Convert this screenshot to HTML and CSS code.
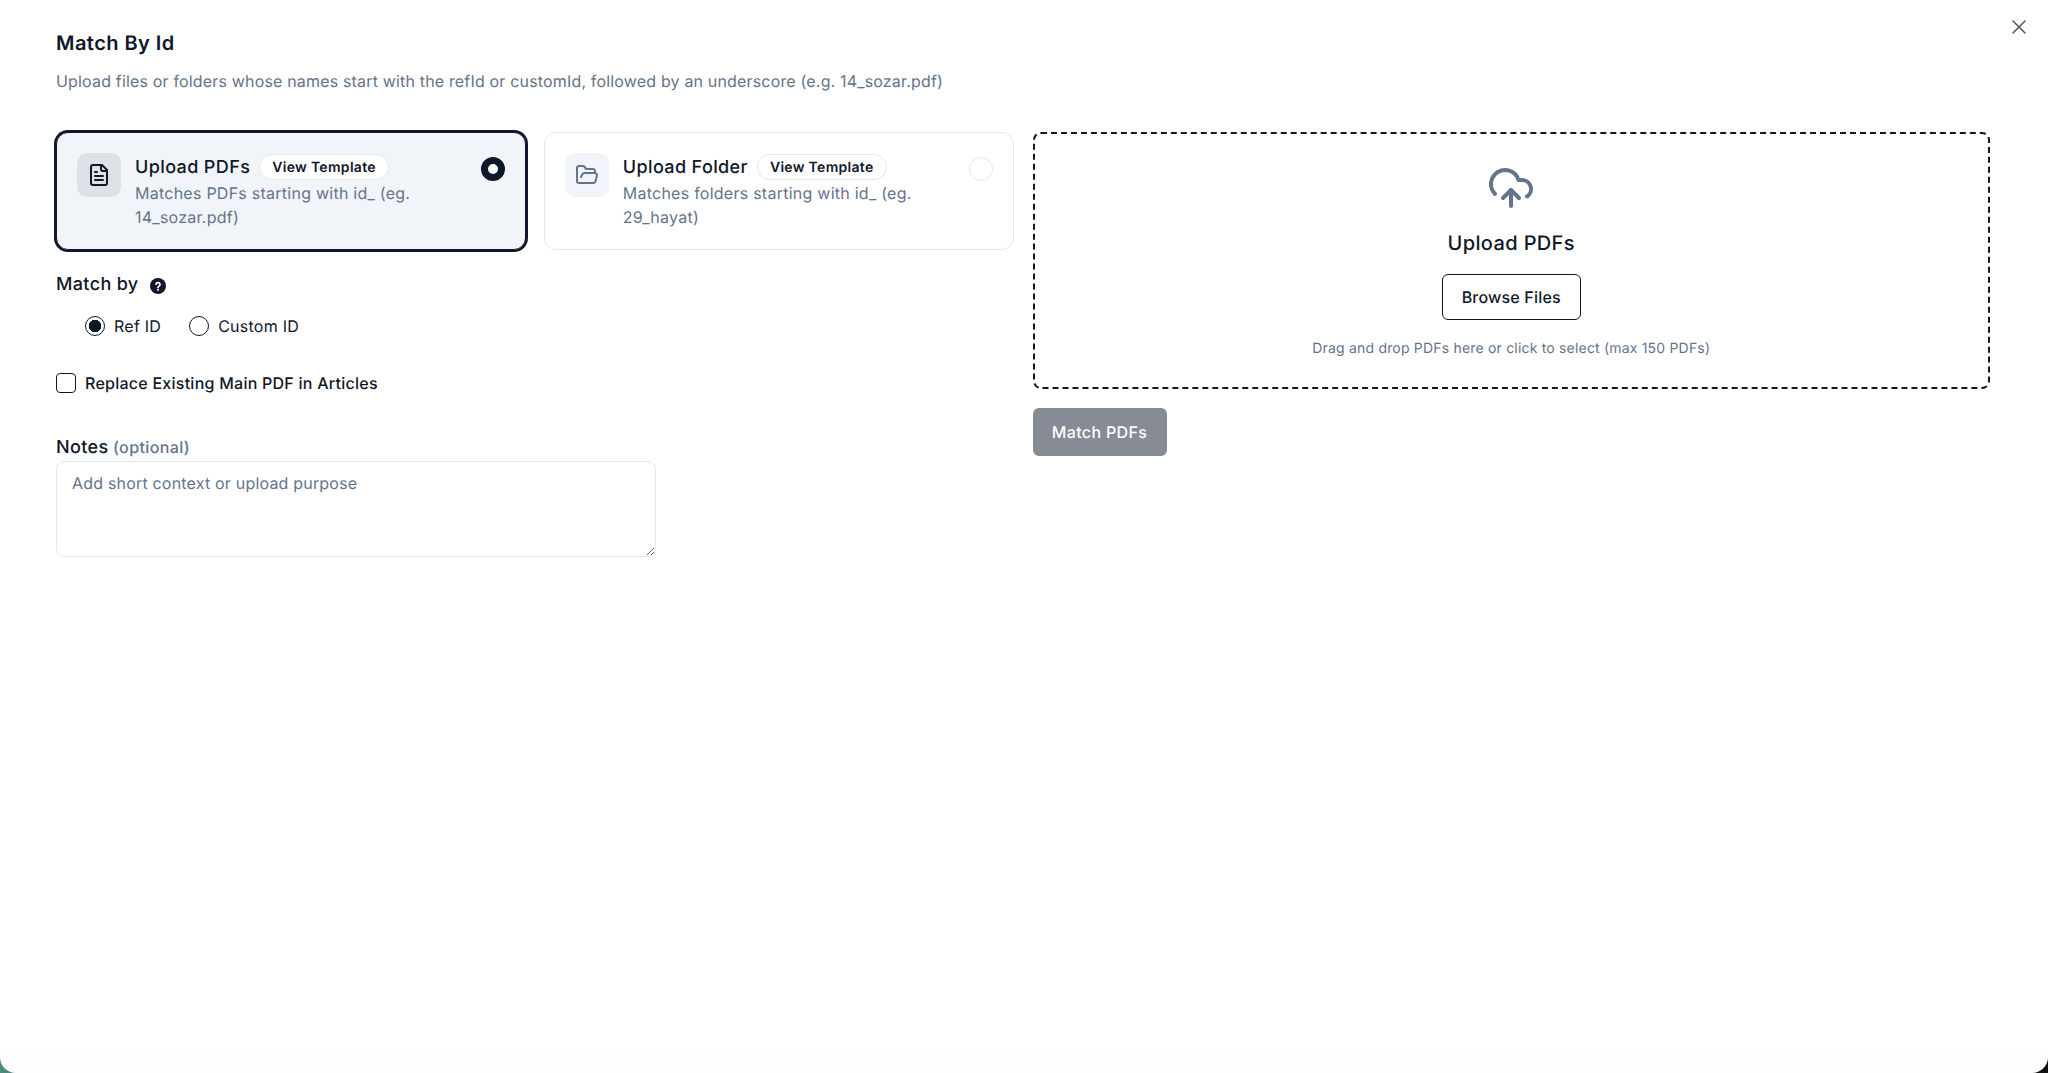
FILE: index.html
```html
<!DOCTYPE html>
<html lang="en">
<head>
<meta charset="utf-8">
<title>Match By Id</title>
<link rel="stylesheet" href="styles.css">
</head>
<body>
<div class="modal">
  <button class="close" aria-label="Close">
    <svg class="icon-close" viewBox="0 0 24 24"><path d="M18 6 6 18"/><path d="m6 6 12 12"/></svg>
  </button>
  <header class="head">
    <h1 class="title">Match By Id</h1>
    <p class="subtitle">Upload files or folders whose names start with the refId or customId, followed by an underscore (e.g. 14_sozar.pdf)</p>
  </header>
  <div class="columns">
    <section class="left">
      <div class="cards">
        <div class="card card-active">
          <div class="card-icon">
            <svg class="icon-24" viewBox="0 0 24 24"><path d="M15 2H6a2 2 0 0 0-2 2v16a2 2 0 0 0 2 2h12a2 2 0 0 0 2-2V7Z"/><path d="M14 2v4a2 2 0 0 0 2 2h4"/><path d="M10 9H8"/><path d="M16 13H8"/><path d="M16 17H8"/></svg>
          </div>
          <div class="card-body">
            <div class="card-title-row"><span class="card-title">Upload PDFs</span><span class="badge">View Template</span></div>
            <p class="card-desc">Matches PDFs starting with id_ (eg. 14_sozar.pdf)</p>
          </div>
          <span class="card-radio"></span>
        </div>
        <div class="card">
          <div class="card-icon">
            <svg class="icon-24" viewBox="0 0 24 24"><path d="m6 14 1.5-2.9A2 2 0 0 1 9.24 10H20a2 2 0 0 1 1.94 2.5l-1.54 6a2 2 0 0 1-1.95 1.5H4a2 2 0 0 1-2-2V5a2 2 0 0 1 2-2h3.9a2 2 0 0 1 1.69.9l.81 1.2a2 2 0 0 0 1.67.9H18a2 2 0 0 1 2 2v2"/></svg>
          </div>
          <div class="card-body">
            <div class="card-title-row"><span class="card-title">Upload Folder</span><span class="badge">View Template</span></div>
            <p class="card-desc">Matches folders starting with id_ (eg. 29_hayat)</p>
          </div>
          <span class="card-radio"></span>
        </div>
      </div>
      <div class="match-by">
        <span class="label label-match">Match by</span>
        <svg class="icon-help" viewBox="0 0 16 16"><circle class="help-disc" cx="8" cy="8" r="8"/><path class="help-mark" d="M5.9 6.2a2.15 2.15 0 0 1 4.2.3c0 1.4-2.1 1.7-2.1 3"/><circle class="help-dot" cx="8" cy="11.8" r="1"/></svg>
      </div>
      <div class="radio-row">
        <span class="option"><span class="radio radio-on"></span>Ref ID</span>
        <span class="option"><span class="radio"></span>Custom ID</span>
      </div>
      <div class="check-row"><span class="checkbox"></span>Replace Existing Main PDF in Articles</div>
      <div class="notes-label"><span class="label">Notes</span> <span class="optional">(optional)</span></div>
      <textarea class="notes" placeholder="Add short context or upload purpose"></textarea>
    </section>
    <section class="right">
      <div class="drop">
        <svg class="icon-cloud" viewBox="0 0 24 24"><path d="M12 13v8"/><path d="M4 14.899A7 7 0 1 1 15.71 8h1.79a4.5 4.5 0 0 1 2.5 8.242"/><path d="m8 17 4-4 4 4"/></svg>
        <div class="drop-title">Upload PDFs</div>
        <button class="browse">Browse Files</button>
        <div class="drop-hint">Drag and drop PDFs here or click to select (max 150 PDFs)</div>
      </div>
      <button class="submit">Match PDFs</button>
    </section>
  </div>
</div>
</body>
</html>
```
FILE: styles.css
```css
* { box-sizing: border-box; }
html, body { height: 100%; }
body {
  margin: 0;
  overflow: hidden;
  font-family: Inter, "Liberation Sans", sans-serif;
  text-rendering: geometricPrecision;
  color: #0f172a;
  background: linear-gradient(90deg, #4f8a80 0%, #4f8a80 50%, #111 50%, #111 100%);
}
svg { fill: none; stroke: currentColor; stroke-width: 2; stroke-linecap: round; stroke-linejoin: round; flex: none; }
.modal {
  position: relative;
  height: 100%;
  padding: 29px 58px 0 56px;
  background: linear-gradient(#fff 96%, #fdfdfd 100%);
  border-radius: 0 0 16px 16px;
}
.close {
  position: absolute;
  top: 15px;
  right: 17px;
  width: 24px;
  height: 24px;
  padding: 0;
  border: 0;
  background: none;
  color: #4b5563;
  display: flex;
}
.icon-close { width: 24px; height: 24px; stroke-width: 1.5; }
.head { margin-bottom: 39px; }
.title { margin: 0 0 12px; font-size: 20px; line-height: 28px; font-weight: 600; letter-spacing: 0.45px; }
.subtitle { margin: 0; font-size: 16px; line-height: 24px; color: #64748b; letter-spacing: 0.17px; }
.columns { display: grid; grid-template-columns: 1fr 1fr; gap: 19px; align-items: start; }
.cards { display: grid; grid-template-columns: 1fr 1fr; gap: 18px; }
.card {
  display: flex;
  align-items: flex-start;
  gap: 14px;
  padding: 20px;
  background: #fff;
  border: 1px solid #e2e8f0;
  border-radius: 12px;
}
.card-active { background: #f1f5f9; border-color: #0f172a; box-shadow: 0 0 0 2px #0f172a; }
.card-icon {
  width: 44px;
  height: 44px;
  flex: none;
  display: flex;
  align-items: center;
  justify-content: center;
  border-radius: 10px;
  background: #f1f5f9;
  color: #64748b;
}
.card-active .card-icon { background: #dee2e8; color: #0f172a; }
.icon-24 { width: 24px; height: 24px; }
.card-body { flex: 1; min-width: 0; }
.card-title-row { display: flex; align-items: center; gap: 9px; height: 28px; }
.card-title { padding-top: 2px; font-size: 18px; line-height: 28px; font-weight: 500; white-space: nowrap; letter-spacing: 0.38px; }
.badge {
  height: 26px;
  padding: 0 12px;
  display: inline-flex;
  align-items: center;
  font-size: 14px;
  font-weight: 600;
  white-space: nowrap;
  letter-spacing: 0.3px;
  background: #fff;
  border: 1px solid #e2e8f0;
  border-radius: 13px;
}
.card-desc { margin: 0; font-size: 16px; line-height: 24px; color: #64748b; letter-spacing: 0.25px; }
.card-radio {
  width: 24px;
  height: 24px;
  flex: none;
  margin-top: 4px;
  border-radius: 50%;
  border: 1px solid #e2e8f0;
  background: #fff;
}
.card-active .card-radio { border: 7px solid #0f172a; }
.match-by { display: flex; align-items: center; gap: 11px; height: 28px; margin-top: 20px; }
.label { font-size: 18px; line-height: 28px; font-weight: 500; letter-spacing: 0.35px; }
.label-match { padding-top: 2px; }
.icon-help { width: 16px; height: 16px; margin-top: 4px; stroke: none; }
.help-disc { fill: #0f172a; stroke: none; }
.help-mark { stroke: #fff; stroke-width: 1.7; }
.help-dot { fill: #fff; stroke: none; }
.radio-row { display: flex; gap: 28px; margin-top: 18px; padding-left: 29px; }
.option { display: flex; align-items: center; gap: 9px; height: 20px; font-size: 16px; line-height: 20px; letter-spacing: 0.25px; }
.radio {
  width: 20px;
  height: 20px;
  border-radius: 50%;
  border: 1.5px solid #0f172a;
  background: #fff;
}
.radio-on { background: radial-gradient(circle, #0f172a 0 6px, #fff 6.5px); }
.check-row { display: flex; align-items: center; gap: 9px; margin-top: 37px; height: 20px; font-size: 16px; font-weight: 500; letter-spacing: 0.25px; }
.checkbox { width: 20px; height: 20px; border: 1.5px solid #0f172a; border-radius: 4px; background: #fff; }
.notes-label { margin-top: 40px; height: 28px; line-height: 28px; }
.optional { font-size: 16px; font-weight: 500; color: #64748b; letter-spacing: 0.4px; }
.notes {
  display: block;
  width: 600px;
  height: 96px;
  padding: 9px 15px;
  border: 1px solid #e2e8f0;
  border-radius: 8px;
  font: 16px/24px Inter, "Liberation Sans", sans-serif;
  letter-spacing: 0.19px;
  text-rendering: geometricPrecision;
  color: #0f172a;
  outline: 0;
}
.notes::placeholder { color: #64748b; opacity: 1; }
.drop {
  height: 257px;
  padding-top: 30px;
  display: flex;
  flex-direction: column;
  align-items: center;
  border: 2px dashed #0f172a;
  border-radius: 8px;
}
.icon-cloud { width: 48px; height: 48px; color: #64748b; }
.drop-title { margin-top: 17px; font-size: 20px; line-height: 28px; font-weight: 500; letter-spacing: 0.36px; }
.browse {
  margin-top: 17px;
  width: 139px;
  height: 46px;
  background: #fff;
  border: 1px solid #0f172a;
  border-radius: 6px;
  font: 500 16px/24px Inter, "Liberation Sans", sans-serif;
  letter-spacing: 0.2px;
  text-rendering: geometricPrecision;
  color: #0f172a;
}
.drop-hint { margin-top: 19px; font-size: 14px; line-height: 20px; color: #64748b; letter-spacing: 0.19px; }
.submit {
  display: block;
  margin-top: 19px;
  width: 134px;
  height: 48px;
  border: 0;
  border-radius: 6px;
  background: #878b96;
  color: #fff;
  font: 500 16px/24px Inter, "Liberation Sans", sans-serif;
  letter-spacing: 0.35px;
  text-rendering: geometricPrecision;
}
```
